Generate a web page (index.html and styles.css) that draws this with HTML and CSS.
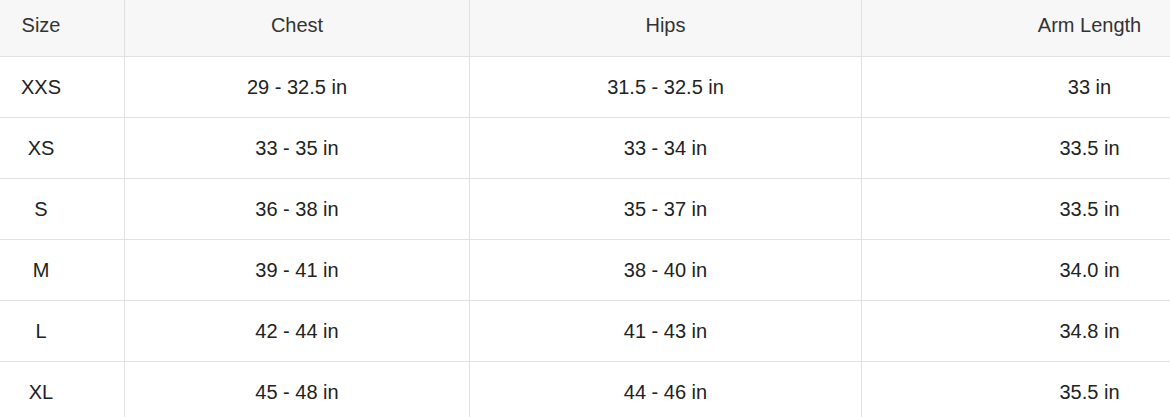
FILE: index.html
```html
<!DOCTYPE html>
<html lang="en">
<head>
<meta charset="utf-8">
<title>Size Chart</title>
<link rel="stylesheet" href="styles.css">
</head>
<body>
<div class="chart" role="table">
  <div class="cell head first" role="columnheader">Size</div>
  <div class="cell head" role="columnheader">Chest</div>
  <div class="cell head" role="columnheader">Hips</div>
  <div class="cell head last" role="columnheader">Arm Length</div>

  <div class="cell first">XXS</div>
  <div class="cell">29 - 32.5 in</div>
  <div class="cell">31.5 - 32.5 in</div>
  <div class="cell last">33 in</div>

  <div class="cell first">XS</div>
  <div class="cell">33 - 35 in</div>
  <div class="cell">33 - 34 in</div>
  <div class="cell last">33.5 in</div>

  <div class="cell first">S</div>
  <div class="cell">36 - 38 in</div>
  <div class="cell">35 - 37 in</div>
  <div class="cell last">33.5 in</div>

  <div class="cell first">M</div>
  <div class="cell">39 - 41 in</div>
  <div class="cell">38 - 40 in</div>
  <div class="cell last">34.0 in</div>

  <div class="cell first">L</div>
  <div class="cell">42 - 44 in</div>
  <div class="cell">41 - 43 in</div>
  <div class="cell last">34.8 in</div>

  <div class="cell first">XL</div>
  <div class="cell">45 - 48 in</div>
  <div class="cell">44 - 46 in</div>
  <div class="cell last">35.5 in</div>
</div>
</body>
</html>
```
FILE: styles.css
```css
html, body {
  margin: 0;
  padding: 0;
  background: #ffffff;
  overflow: hidden;
}

.chart {
  display: grid;
  grid-template-columns: 125px 345px 392px 308px;
  width: 1170px;
  font-family: "Liberation Sans", Arial, sans-serif;
  font-size: 20px;
  color: #222222;
}

.cell {
  box-sizing: border-box;
  height: 61px;
  display: flex;
  align-items: center;
  justify-content: center;
  border-bottom: 1px solid #e2e2e2;
  border-right: 1px solid #e2e2e2;
  white-space: nowrap;
}

.cell.first {
  padding-right: 42px;
}

.cell.last {
  border-right: none;
  padding-left: 147px;
}

.head {
  height: 57px;
  padding-bottom: 5px;
  background: #f7f7f7;
  color: #333333;
}
```
